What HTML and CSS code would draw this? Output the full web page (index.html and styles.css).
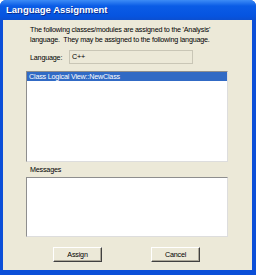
FILE: index.html
```html
<!doctype html>
<html lang="en">
<head>
<meta charset="utf-8">
<title>Language Assignment</title>
<link rel="stylesheet" href="styles.css">
</head>
<body>

<div class="window">
	<div class="titlebar">Language Assignment</div>

	<div class="client">
		<p class="intro">The following classes/modules are assigned to the 'Analysis'<br>language.&nbsp; They may be assigned to the following language.</p>

		<div class="lang_row">
			<span class="label">Language:</span>
			<div class="lang_box">C++</div>
		</div>

		<ul class="list">
			<li class="sel">Class Logical View::NewClass</li>
		</ul>

		<div class="msg_label">Messages</div>
		<div class="msg_box"></div>

		<div class="buttons">
			<button class="btn">Assign</button>
			<button class="btn">Cancel</button>
		</div>
	</div>
</div>

</body>
</html>
```

FILE: styles.css
```css
body,ul,p {margin:0;padding:0;}
ul {list-style:none;}

body {
	background:#fff;
	font-family:"Liberation Sans", Arial, sans-serif;
}

.window {
	display:flex;
	flex-direction:column;
	width:256px; height:275px;
	background:#0b4fd8;
	border-radius:6px 6px 0 0;
	box-sizing:border-box;
}

.titlebar {
	height:20px;
	padding-left:6px;
	line-height:20px;
	font-size:9.5px;
	font-weight:bold;
	color:#fff;
	background:linear-gradient(#3d8cf6, #0a5ce6 30%, #0654e0 80%, #0b4fd0);
	border-radius:6px 6px 0 0;
	text-shadow:1px 1px 0 #0a2f90;
}

.client {
	flex:1;
	margin:0 4px 5px 3px;
	padding:5px 24px 0 23px;
	background:#ece9d8;
	font-size:7.2px;
	letter-spacing:-0.2px;
	color:#000;
}

.intro {
	padding-left:4px;
	line-height:10px;
	white-space:nowrap;
}

.lang_row {
	display:flex;
	align-items:center;
	margin-top:5px;
	padding-left:4px;
}

.lang_row .label { width:39px; }

.lang_box {
	width:120px; height:12px;
	line-height:12px;
	padding-left:2px;
	border:1px solid #c9c6b6;
	background:#ece9d8;
}

.list {
	margin-top:7px;
	height:89px;
	background:#fff;
	border:1px solid #8e8e8e;
	border-right-color:#ddd;
	border-bottom-color:#ddd;
}

.list li {
	height:9px;
	line-height:9px;
	padding-left:2px;
}

.list li.sel {
	background:#316ac5;
	color:#fff;
}

.msg_label {
	margin-top:3px;
	padding-left:4px;
	line-height:10px;
}

.msg_box {
	margin-top:2px;
	height:58px;
	background:#fff;
	border:1px solid #8e8e8e;
	border-right-color:#ddd;
	border-bottom-color:#ddd;
}

.buttons {
	display:flex;
	gap:49px;
	margin-top:10px;
	padding-left:27px;
}

.btn {
	width:49px; height:15px;
	padding:0;
	font-family:inherit;
	font-size:7.2px;
	letter-spacing:-0.2px;
	color:#000;
	background:#ece9d8;
	border:1px solid;
	border-color:#fff #404040 #404040 #fff;
	box-shadow:inset -1px -1px 0 #aca899;
}
```
